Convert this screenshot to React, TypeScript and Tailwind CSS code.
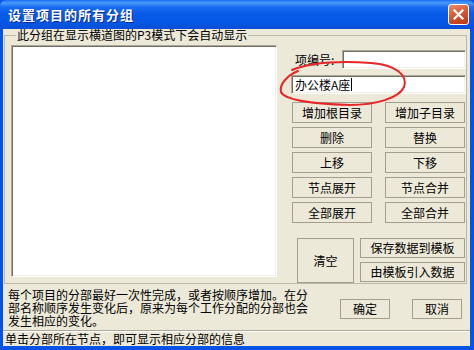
const btn =
  "flex items-center justify-center border border-[#a39f8e] bg-[#ece9d8] text-[12px] leading-none text-black";

const sunken =
  "border border-t-[#aca899] border-l-[#aca899] border-r-white border-b-white bg-white shadow-[inset_1px_1px_0_#716f64,inset_-1px_-1px_0_#f1efe2]";

export default function App() {
  return (
    <div className="relative flex h-[350px] w-[474px] flex-col bg-[#0753e4] font-['Noto_Sans_CJK_SC','Noto_Sans',sans-serif] text-[12px] text-black">
      {/* title bar */}
      <div className="flex h-[29px] shrink-0 items-center justify-between rounded-t-[6px] bg-[linear-gradient(180deg,#1b6ef2_0px,#4a9bfa_3px,#1a6cf0_7px,#085be9_14px,#0556e4_23px,#0a4fd6_29px)] pl-[8px] pr-[5px]">
        <span className="text-[13px] font-bold tracking-[1px] text-white [text-shadow:1px_1px_0_#0a2a8a]">
          设置项目的所有分组
        </span>
        <button className="flex h-[21px] w-[21px] items-center justify-center rounded-[3px] border border-white bg-[linear-gradient(160deg,#ec8a6c,#d2522d_55%,#b8381a)]">
          <svg width="11" height="11" viewBox="0 0 11 11">
            <path d="M1.5 1.5 L9.5 9.5 M9.5 1.5 L1.5 9.5" stroke="white" strokeWidth="2.2" strokeLinecap="square" />
          </svg>
        </button>
      </div>

      {/* dialog body */}
      <div className="ml-[3px] mr-[4px] flex h-[317px] flex-col bg-[#ece9d8]">
        <fieldset className="ml-[1px] flex h-[255px] w-[463px] border border-[#bcb8a6] pb-0 pl-[6px] pt-[4px]">
          <legend className="ml-[5px] px-[1px] leading-[12px]">此分组在显示横道图的P3模式下会自动显示</legend>

          <div className={`h-[232px] w-[266px] shrink-0 ${sunken}`} />

          <div className="ml-[14px] mt-[5px] flex w-[175px] flex-col">
            <div className="flex h-[19px] items-center">
              <span className="pl-[4px]">项编号:</span>
              <div className={`ml-auto h-[19px] w-[124px] ${sunken}`} />
            </div>
            <div className={`mt-[6px] flex h-[19px] items-center pl-[3px] ${sunken}`}>
              <span>办公楼A座</span>
              <span className="ml-px inline-block h-[13px] w-px bg-black" />
            </div>

            <div className="mt-[8px] grid grid-cols-[80px_80px] gap-x-[13px] gap-y-[4px] pl-[1px]">
              {["增加根目录", "增加子目录", "删除", "替换", "上移", "下移", "节点展开", "节点合并", "全部展开", "全部合并"].map(
                (t) => (
                  <button key={t} className={`h-[21px] ${btn}`}>
                    {t}
                  </button>
                )
              )}
            </div>

            <div className="mt-[15px] flex pl-[6px]">
              <button className={`h-[45px] w-[57px] ${btn}`}>清空</button>
              <div className="ml-[6px] flex w-[105px] flex-col gap-[4px]">
                <button className={`h-[20px] ${btn}`}>保存数据到模板</button>
                <button className={`h-[20px] ${btn}`}>由模板引入数据</button>
              </div>
            </div>
          </div>
        </fieldset>

        {/* note + ok/cancel */}
        <div className="flex h-[46px] items-start pl-[5px]">
          <p className="w-[300px] pt-[4px] leading-[13px]">
            <span className="block">每个项目的分部最好一次性完成，或者按顺序增加。在分</span>
            <span className="block">部名称顺序发生变化后，原来为每个工作分配的分部也会</span>
            <span className="block">发生相应的变化。</span>
          </p>
          <button className={`ml-[32px] mt-[15px] h-[20px] w-[50px] ${btn}`}>确定</button>
          <button className={`ml-[22px] mt-[15px] h-[20px] w-[50px] ${btn}`}>取消</button>
        </div>

        {/* status bar */}
        <div className="h-[16px] border-t border-[#aca899] pl-[2px] pt-[1px] leading-[13px] shadow-[inset_0_1px_0_#fff]">
          单击分部所在节点，即可显示相应分部的信息
        </div>
      </div>

      {/* red hand-drawn annotation */}
      <svg
        className="pointer-events-none absolute left-[276px] top-[58px]"
        width="134"
        height="52"
        viewBox="276 58 134 52"
      >
        <path
          d="M298 71 C288 75 279 84 281 92 C285 101 318 104 350 105 C376 105 399 98 404 87 C408 75 396 65 371 63 C342 61 312 62 292 70"
          fill="none"
          stroke="#e8262a"
          strokeWidth="2"
          strokeLinecap="round"
        />
      </svg>
    </div>
  );
}
